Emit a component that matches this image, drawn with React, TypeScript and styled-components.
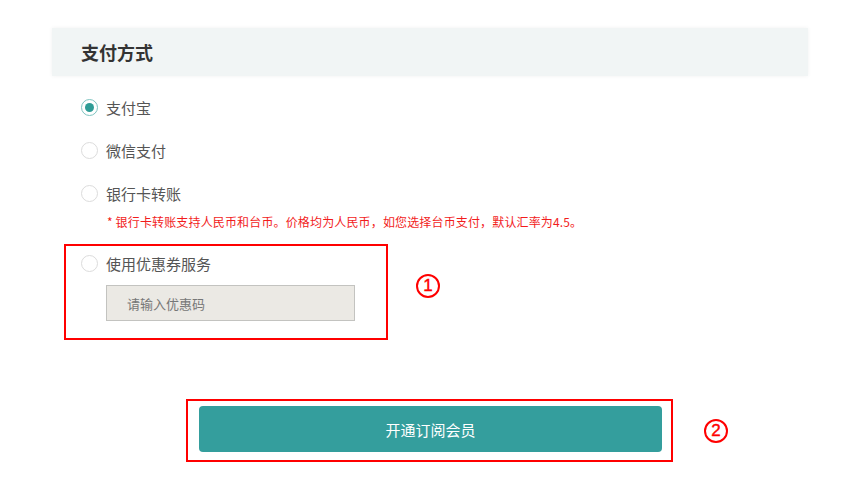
import styled, { createGlobalStyle } from "styled-components";

const GlobalStyle = createGlobalStyle`
  body {
    margin: 0;
    background: #ffffff;
    font-family: "Noto Sans CJK SC", "Noto Sans", sans-serif;
  }
`;

const Page = styled.div`
  padding: 28px 0 0 52px;
  width: 756px;
`;

const Header = styled.div`
  height: 48px;
  display: flex;
  align-items: center;
  padding-left: 29px;
  background: #f1f5f5;
  box-shadow: 0 0 4px rgba(0, 0, 0, 0.06);
`;

const Title = styled.h2`
  margin: 0;
  font-size: 18px;
  font-weight: 700;
  color: #333;
`;

const Body = styled.div`
  padding-left: 12px;
`;

const Options = styled.div`
  display: flex;
  flex-direction: column;
  gap: 21px;
  margin-top: 20px;
  padding-left: 17px;
`;

const Row = styled.label`
  display: flex;
  align-items: center;
  gap: 8px;
  height: 22px;
  font-size: 15px;
  color: #555;
`;

const Radio = styled.span<{ $checked?: boolean }>`
  width: 17px;
  height: 17px;
  box-sizing: border-box;
  border-radius: 50%;
  border: 1px solid ${({ $checked }) => ($checked ? "#7fc4c1" : "#dcdcdc")};
  display: flex;
  align-items: center;
  justify-content: center;

  &::after {
    content: "";
    width: 9px;
    height: 9px;
    border-radius: 50%;
    background: #2f9c96;
    display: ${({ $checked }) => ($checked ? "block" : "none")};
  }
`;

const Note = styled.div`
  margin: 9px 0 0 43px;
  font-size: 12px;
  line-height: 18px;
  letter-spacing: 0.15px;
  color: #f21c1c;
`;

const Annotated = styled.div`
  display: flex;
  align-items: center;
  gap: 28px;
`;

const RedBox = styled.div<{ $w: number }>`
  width: ${({ $w }) => $w}px;
  box-sizing: border-box;
  border: 2px solid #ff0000;
`;

const CouponBox = styled(RedBox)`
  margin-top: 13px;
  padding: 6px 0 17px 15px;
`;

const CouponInput = styled.input`
  display: block;
  margin: 11px 0 0 25px;
  width: 249px;
  height: 36px;
  box-sizing: border-box;
  background: #ebe9e4;
  border: 1px solid #c3c3c0;
  padding: 0 0 0 20px;
  font-family: inherit;
  font-size: 13px;
  outline: none;

  &::placeholder {
    color: #777;
  }
`;

const Mark = styled.span`
  width: 24px;
  height: 24px;
  box-sizing: border-box;
  border: 2px solid #ff0000;
  border-radius: 50%;
  display: flex;
  align-items: center;
  justify-content: center;
  font-family: "Liberation Sans", sans-serif;
  font-size: 17px;
  line-height: 1;
  color: #ff0000;
  -webkit-text-stroke: 0.4px #ff0000;
`;

const SubmitRow = styled(Annotated)`
  margin: 59px 0 0 122px;
  gap: 31px;
`;

const SubmitBox = styled(RedBox)`
  height: 63px;
  padding: 5px 9px 0 11px;
`;

const Submit = styled.button`
  width: 100%;
  height: 46px;
  border: none;
  border-radius: 4px;
  background: #349e9d;
  color: #fff;
  font-family: inherit;
  font-size: 15px;
  cursor: pointer;
`;

export default function App() {
  return (
    <Page>
      <GlobalStyle />
      <Header>
        <Title>支付方式</Title>
      </Header>
      <Body>
        <Options>
          <Row>
            <Radio $checked />
            支付宝
          </Row>
          <Row>
            <Radio />
            微信支付
          </Row>
          <Row>
            <Radio />
            银行卡转账
          </Row>
        </Options>
        <Note>* 银行卡转账支持人民币和台币。价格均为人民币，如您选择台币支付，默认汇率为4.5。</Note>
        <Annotated>
          <CouponBox $w={324}>
            <Row>
              <Radio />
              使用优惠券服务
            </Row>
            <CouponInput placeholder="请输入优惠码" />
          </CouponBox>
          <Mark>1</Mark>
        </Annotated>
        <SubmitRow>
          <SubmitBox $w={487}>
            <Submit>开通订阅会员</Submit>
          </SubmitBox>
          <Mark>2</Mark>
        </SubmitRow>
      </Body>
    </Page>
  );
}
